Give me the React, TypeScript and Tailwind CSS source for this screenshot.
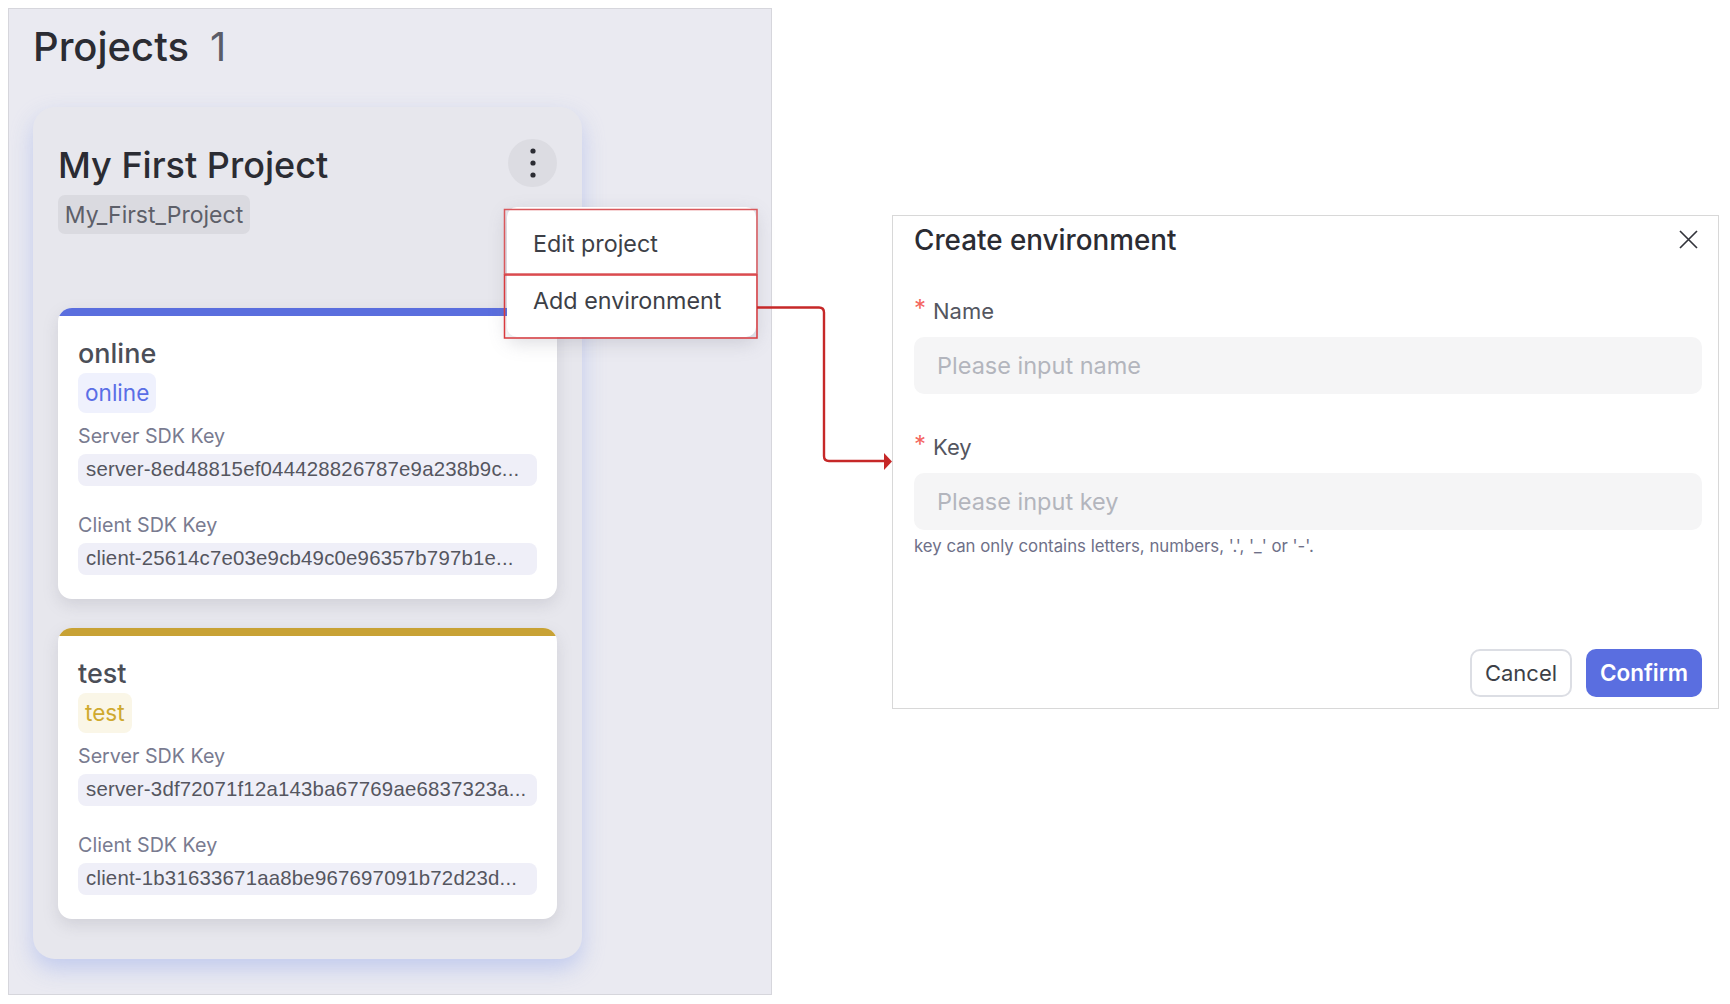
import React from "react";

const font = { fontFamily: "Inter, 'Liberation Sans', sans-serif" };

function KeyRow({ label, value, cls }: { label: string; value: string; cls: string }) {
  return (
    <div className={cls}>
      <div className="h-[28px] text-[19.7px] leading-[28px] text-[#797b90]">{label}</div>
      <div className="mt-[4px] flex h-[32px] items-center overflow-hidden whitespace-nowrap rounded-[8px] bg-[#efeff8] pb-[2px] pl-[8px] font-['Liberation_Sans',sans-serif] text-[20.4px] tracking-[0.2px] text-[#55565f]">
        {value}
      </div>
    </div>
  );
}

function EnvCard(props: {
  name: string;
  bar: string;
  tagBg: string;
  tagText: string;
  server: string;
  client: string;
}) {
  return (
    <div className="h-[291px] overflow-hidden rounded-[14px] bg-white shadow-[0_6px_16px_rgba(120,120,135,0.2)]">
      <div className={`h-[8px] ${props.bar}`} />
      <div className="px-[20px] pt-[19px]">
        <div className="h-[37px] text-[27px] font-medium leading-[37px] text-[#4b4e57]">{props.name}</div>
        <div className={`mt-[1px] flex h-[40px] w-fit items-center rounded-[8px] px-[7px] text-[22.6px] ${props.tagBg} ${props.tagText}`}>
          {props.name}
        </div>
        <KeyRow label={props.server.split("|")[0]} value={props.server.split("|")[1]} cls="mt-[9px]" />
        <KeyRow label={props.client.split("|")[0]} value={props.client.split("|")[1]} cls="mt-[25px]" />
      </div>
    </div>
  );
}

function Field({ label, placeholder }: { label: string; placeholder: string }) {
  return (
    <div>
      <div className="flex h-[34px] items-center">
        <span className="mb-[4px] w-[19px] text-[24px] leading-none text-[#f4665f]">*</span>
        <span className="text-[22px] text-[#54565f]">{label}</span>
      </div>
      <div className="mt-[9px] flex h-[57px] items-center rounded-[10px] bg-[#f5f5f6] px-[23px] text-[23.5px] text-[#b3b5bd]">
        {placeholder}
      </div>
    </div>
  );
}

export default function App() {
  return (
    <div style={font} className="relative flex h-[1004px] w-[1730px] items-start overflow-hidden bg-white">
      <section className="ml-[8px] mt-[8px] h-[987px] w-[764px] border border-[#d6d6dc] bg-[#eaeaf1] pl-[24px] pt-[13px]">
        <div className="flex h-[50px] items-center text-[40px] font-medium leading-[50px] text-[#2b2c33]">
          <span>Projects</span>
          <span className="ml-[21px] font-normal text-[#5b5d68]">1</span>
        </div>
        <div className="mt-[35px] h-[852px] w-[549px] rounded-[22px] bg-[#e7e7ed] px-[25px] pt-[32px] shadow-[0_10px_22px_rgba(180,192,236,0.75)]">
          <div className="flex items-start justify-between">
            <div className="pt-[3px] text-[36px] font-medium leading-[46px] text-[#2b2c33]">My First Project</div>
            <div className="flex h-[48px] w-[49px] items-center justify-center rounded-full bg-[#dcdce2]">
              <svg width="6" height="30" viewBox="0 0 6 30" fill="#2b2c33">
                <circle cx="3" cy="3" r="2.6" />
                <circle cx="3" cy="15" r="2.6" />
                <circle cx="3" cy="27" r="2.6" />
              </svg>
            </div>
          </div>
          <div className="mt-[7px] flex h-[39px] w-[192px] items-center justify-center rounded-[7px] bg-[#dadae0] pt-[2px] text-[23px] text-[#5d5f69]">
            My_First_Project
          </div>
          <div className="mt-[74px] flex flex-col gap-[29px]">
            <EnvCard
              name="online"
              bar="bg-[#5a6ede]"
              tagBg="bg-[#eff1fd]"
              tagText="text-[#5a6ee6]"
              server="Server SDK Key|server-8ed48815ef044428826787e9a238b9c..."
              client="Client SDK Key|client-25614c7e03e9cb49c0e96357b797b1e..."
            />
            <EnvCard
              name="test"
              bar="bg-[#c8a235]"
              tagBg="bg-[#faf6e7]"
              tagText="text-[#cfa92f]"
              server="Server SDK Key|server-3df72071f12a143ba67769ae6837323a..."
              client="Client SDK Key|client-1b31633671aa8be967697091b72d23d..."
            />
          </div>
        </div>
      </section>

      {/* dropdown menu, lying over the project card */}
      <div className="absolute left-[507px] top-[207px] h-[130px] w-[249px] rounded-[10px] bg-white text-[23.3px] text-[#3d3f47] shadow-[0_6px_18px_rgba(120,120,135,0.25)]">
        <div className="absolute left-[26px] top-[19px] leading-[36px]">Edit project</div>
        <div className="absolute left-[26px] top-[76px] leading-[36px]">Add environment</div>
      </div>

      {/* annotation: red frames and connector */}
      <svg className="pointer-events-none absolute left-0 top-0" width="1730" height="1004" fill="none">
        <rect x="504.5" y="209.5" width="252.5" height="64.5" stroke="#d9585c" strokeWidth="1.5" />
        <rect x="504.5" y="275" width="252.5" height="63" stroke="#d93a3e" strokeWidth="1.5" />
        <path d="M757 307.5 H819 Q824 307.5 824 312.5 V456 Q824 461 829 461 H886" stroke="#c62828" strokeWidth="2.4" />
        <path d="M884 453 L892 461.5 L884 470 Z" fill="#c62828" />
      </svg>

      <section className="ml-[120px] mt-[215px] flex h-[494px] w-[827px] flex-col border border-[#d8d8d8] bg-white pl-[21px] pr-[16px]">
        <div className="flex h-[48px] items-center justify-between">
          <div className="text-[27.8px] font-medium leading-[40px] text-[#2b2c33]">Create environment</div>
          <svg className="mb-[1px] mr-[4px]" width="19" height="19" viewBox="0 0 19 19" stroke="#33343b" strokeWidth="1.7" fill="none">
            <path d="M1 1 L18 18 M18 1 L1 18" />
          </svg>
        </div>
        <div className="mt-[30px] flex flex-col gap-[36px]">
          <Field label="Name" placeholder="Please input name" />
          <Field label="Key" placeholder="Please input key" />
        </div>
        <div className="mt-[4px] text-[16.8px] leading-[24px] text-[#6e7088]">
          key can only contains letters, numbers, '.', '_' or '-'.
        </div>
        <div className="mb-[11px] mt-auto flex justify-end gap-[14px]">
          <div className="flex h-[48px] w-[102px] items-center justify-center rounded-[10px] border-2 border-[#dcdee4] text-[22px] text-[#3d3f47]">
            Cancel
          </div>
          <div className="flex h-[48px] w-[116px] items-center justify-center rounded-[10px] bg-[#5a6ee0] text-[22.5px] font-semibold text-white">
            Confirm
          </div>
        </div>
      </section>
    </div>
  );
}
